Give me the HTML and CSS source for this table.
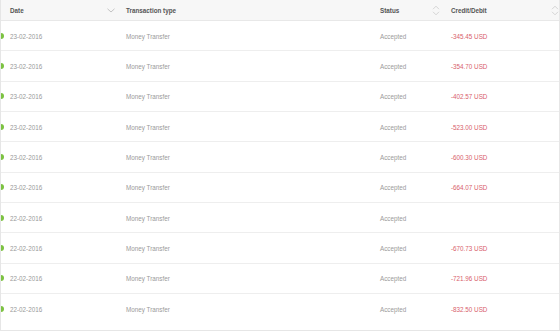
FILE: index.html
```html
<!DOCTYPE html>
<html>
<head>
    <title>Transactions</title>
    <link rel="stylesheet" href="styles.css">
</head>
<body>
    <div class="table-wrap">
        <table class="tx-table">
            <colgroup>
                <col class="col-date">
                <col class="col-type">
                <col class="col-status">
                <col class="col-amount">
            </colgroup>
            <thead>
                <tr>
                    <th><div class="th-inner">Date <svg class="chevron" width="8" height="5" viewBox="0 0 8 5"><path d="M0.5 0.8 L4 4 L7.5 0.8" fill="none" stroke="#bdbdbd" stroke-width="0.9"/></svg></div></th>
                    <th><div class="th-inner">Transaction type</div></th>
                    <th><div class="th-inner">Status <svg class="sort" width="8" height="11" viewBox="0 0 8 11"><path d="M1 4.2 L4 1.2 L7 4.2 M1 6.8 L4 9.8 L7 6.8" fill="none" stroke="#d0d0d0" stroke-width="0.9"/></svg></div></th>
                    <th><div class="th-inner">Credit/Debit <svg class="sort" width="8" height="11" viewBox="0 0 8 11"><path d="M1 4.2 L4 1.2 L7 4.2 M1 6.8 L4 9.8 L7 6.8" fill="none" stroke="#d0d0d0" stroke-width="0.9"/></svg></div></th>
                </tr>
            </thead>
            <tbody>
                <tr><td class="date">23-02-2016</td><td>Money Transfer</td><td>Accepted</td><td class="debit">-345.45 USD</td></tr>
                <tr><td class="date">23-02-2016</td><td>Money Transfer</td><td>Accepted</td><td class="debit">-354.70 USD</td></tr>
                <tr><td class="date">23-02-2016</td><td>Money Transfer</td><td>Accepted</td><td class="debit">-402.57 USD</td></tr>
                <tr><td class="date">23-02-2016</td><td>Money Transfer</td><td>Accepted</td><td class="debit">-523.00 USD</td></tr>
                <tr><td class="date">23-02-2016</td><td>Money Transfer</td><td>Accepted</td><td class="debit">-600.30 USD</td></tr>
                <tr><td class="date">23-02-2016</td><td>Money Transfer</td><td>Accepted</td><td class="debit">-664.07 USD</td></tr>
                <tr><td class="date">22-02-2016</td><td>Money Transfer</td><td>Accepted</td><td class="debit"></td></tr>
                <tr><td class="date">22-02-2016</td><td>Money Transfer</td><td>Accepted</td><td class="debit">-670.73 USD</td></tr>
                <tr><td class="date">22-02-2016</td><td>Money Transfer</td><td>Accepted</td><td class="debit">-721.96 USD</td></tr>
                <tr><td class="date">22-02-2016</td><td>Money Transfer</td><td>Accepted</td><td class="debit">-832.50 USD</td></tr>
            </tbody>
        </table>
    </div>
</body>
</html>
```

FILE: styles.css
```css
body {
    margin: 0;
    font-family: "Liberation Sans", Arial, sans-serif;
    background-color: #ffffff;
}
.table-wrap {
    width: 560px;
    box-sizing: border-box;
    border-left: 1px solid #e6e6e6;
    border-right: 1px solid #e6e6e6;
    border-bottom: 1px solid #e6e6e6;
    padding-bottom: 7px;
    overflow: hidden;
}
.tx-table {
    width: 560px;
    margin-left: -1px;
    border-collapse: collapse;
    table-layout: fixed;
    font-size: 6.3px;
}
.col-date {
    width: 116px;
}
.col-type {
    width: 254px;
}
.col-status {
    width: 71px;
}
.col-amount {
    width: 119px;
}
.tx-table th {
    height: 20px;
    padding: 0 0 0 10px;
    background-color: #f7f7f7;
    border-bottom: 1px solid #e8e8e8;
    color: #555555;
    font-weight: bold;
    text-align: left;
}
.th-inner {
    display: flex;
    align-items: center;
    justify-content: space-between;
    padding-right: 1px;
}
.chevron {
    margin-top: 1px;
}
.tx-table td {
    height: 28.33px;
    padding: 1px 0 0 10px;
    border-bottom: 1px solid #eeeeee;
    color: #9a9a9a;
    white-space: nowrap;
}
.tx-table tbody tr:last-child td {
    border-bottom: none;
}
.tx-table td.date {
    position: relative;
}
.tx-table td.date::before {
    content: "";
    position: absolute;
    left: -2px;
    top: 50%;
    width: 6px;
    height: 6px;
    margin-top: -3px;
    border-radius: 50%;
    background-color: #7cc242;
}
.debit {
    color: #d8606c !important;
}
```
